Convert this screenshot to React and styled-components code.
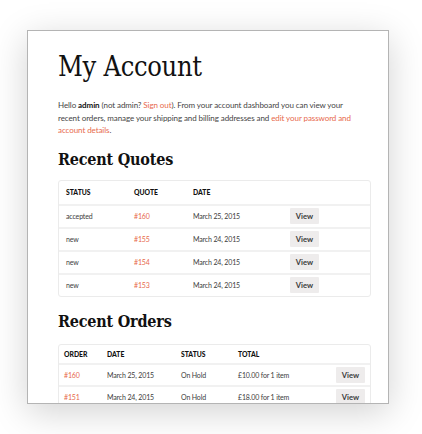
import React from "react";
import styled, { createGlobalStyle } from "styled-components";

const Global = createGlobalStyle`
  body {
    margin: 0;
    background: #ffffff;
    font-family: "Lato", "Open Sans", sans-serif;
  }
`;

const Stage = styled.div`
  width: 422px;
  height: 434px;
  padding: 30px 0 0 27px;
  box-sizing: border-box;
`;

const Frame = styled.div`
  width: 362px;
  height: 374px;
  box-sizing: border-box;
  border: 1px solid #b4b4b4;
  background: #fff;
  overflow: hidden;
  box-shadow: 0 8px 34px rgba(0, 0, 0, 0.18);
  padding: 18px 17px 0 30px;
`;

const Title = styled.h1`
  margin: 0;
  font-family: "DejaVu Serif Condensed", "DejaVu Serif", serif;
  font-weight: normal;
  font-size: 27px;
  line-height: 36px;
  color: #111;
  letter-spacing: -0.3px;
`;

const Intro = styled.p`
  margin: 14px 0 0;
  max-width: 302px;
  font-size: 8px;
  letter-spacing: -0.08px;
  line-height: 12.5px;
  color: #444;
  strong {
    color: #111;
  }
`;

const Link = styled.a`
  color: #e7694c;
  text-decoration: none;
`;

const Heading = styled.h2`
  margin: ${(p) => p.$top}px 0 0;
  font-family: "DejaVu Serif Condensed", "DejaVu Serif", serif;
  font-weight: bold;
  font-size: 16px;
  line-height: 22px;
  color: #111;
  letter-spacing: -0.2px;
`;

const Table = styled.table`
  width: 100%;
  margin-top: ${(p) => p.$top}px;
  border-collapse: separate;
  border-spacing: 0;
  border: 1px solid #ebebeb;
  border-radius: 3px;
  table-layout: fixed;
  font-size: 7px;
  letter-spacing: -0.15px;
  color: #3c3c3c;
`;

const Th = styled.th`
  text-align: left;
  font-weight: 900;
  font-size: 6.8px;
  letter-spacing: 0;
  text-transform: uppercase;
  color: #111;
  height: ${(p) => p.$h}px;
  padding: 0 0 0 ${(p) => p.$pad}px;
  width: ${(p) => (p.$w ? `${p.$w}px` : "auto")};
`;

const Td = styled.td`
  height: ${(p) => p.$h}px;
  padding: 0 ${(p) => (p.$right ? p.$pad : 0)}px 0 ${(p) => p.$pad}px;
  border-top: 2px solid #f1f1f1;
  text-align: ${(p) => (p.$right ? "right" : "left")};
  vertical-align: middle;
  white-space: nowrap;
`;

const Num = styled.a`
  color: #e7694c;
  text-decoration: none;
`;

const ViewButton = styled.button`
  border: 0;
  border-radius: 1px;
  background: #eeecec;
  color: #3a3a3a;
  font-family: inherit;
  font-weight: bold;
  font-size: 7.6px;
  letter-spacing: 0;
  width: 29px;
  height: 16px;
  padding: 0;
  cursor: pointer;
`;

const quotes = [
  { status: "accepted", id: "#160", date: "March 25, 2015" },
  { status: "new", id: "#155", date: "March 24, 2015" },
  { status: "new", id: "#154", date: "March 24, 2015" },
  { status: "new", id: "#153", date: "March 24, 2015" },
];

const orders = [
  { id: "#160", date: "March 25, 2015", status: "On Hold", total: "£10.00 for 1 item" },
  { id: "#151", date: "March 24, 2015", status: "On Hold", total: "£18.00 for 1 item" },
];

const App = () => {
  return (
    <Stage>
      <Global />
      <Frame>
        <Title>My Account</Title>
        <Intro>
          Hello <strong>admin</strong> (not admin? <Link href="#">Sign out</Link>). From your
          account dashboard you can view your recent orders, manage your shipping and billing
          addresses and <Link href="#">edit your password and account details</Link>.
        </Intro>

        <Heading $top={12}>Recent Quotes</Heading>
        <Table $top={9}>
          <thead>
            <tr>
              <Th $h={23} $pad={7} $w={61}>Status</Th>
              <Th $h={23} $pad={7} $w={52}>Quote</Th>
              <Th $h={23} $pad={7} $w={90}>Date</Th>
              <Th $h={23} $pad={7}></Th>
            </tr>
          </thead>
          <tbody>
            {quotes.map((q) => (
              <tr key={q.id}>
                <Td $h={21} $pad={7}>{q.status}</Td>
                <Td $h={21} $pad={7}><Num href="#">{q.id}</Num></Td>
                <Td $h={21} $pad={7}>{q.date}</Td>
                <Td $h={21} $pad={7}><ViewButton>View</ViewButton></Td>
              </tr>
            ))}
          </tbody>
        </Table>

        <Heading $top={14}>Recent Orders</Heading>
        <Table $top={11}>
          <thead>
            <tr>
              <Th $h={18} $pad={5} $w={38}>Order</Th>
              <Th $h={18} $pad={5} $w={69}>Date</Th>
              <Th $h={18} $pad={5} $w={52}>Status</Th>
              <Th $h={18} $pad={5} $w={75}>Total</Th>
              <Th $h={18} $pad={5}></Th>
            </tr>
          </thead>
          <tbody>
            {orders.map((o) => (
              <tr key={o.id}>
                <Td $h={20} $pad={5}><Num href="#">{o.id}</Num></Td>
                <Td $h={20} $pad={5}>{o.date}</Td>
                <Td $h={20} $pad={5}>{o.status}</Td>
                <Td $h={20} $pad={5}>{o.total}</Td>
                <Td $h={20} $pad={5} $right><ViewButton>View</ViewButton></Td>
              </tr>
            ))}
          </tbody>
        </Table>
      </Frame>
    </Stage>
  );
};

export default App;
